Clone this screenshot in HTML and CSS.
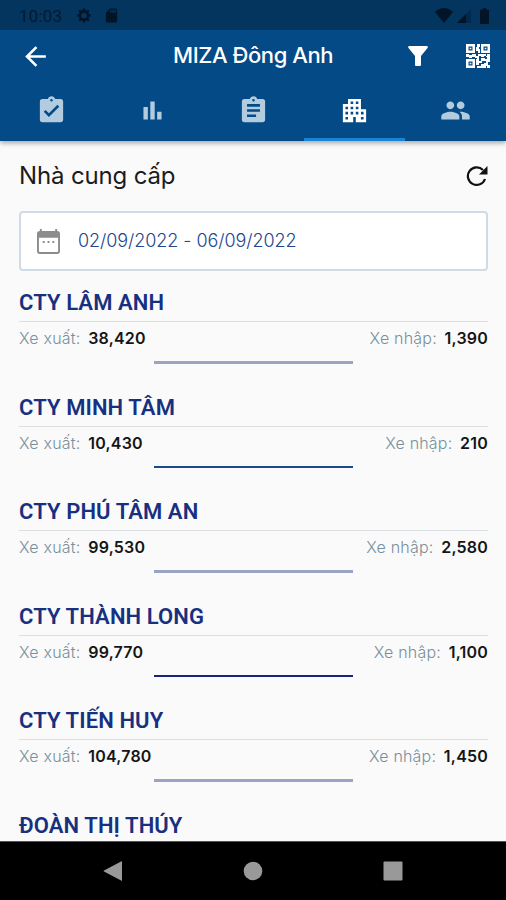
FILE: index.html
```html
<!DOCTYPE html>
<html lang="vi">
<head>
  <meta charset="utf-8">
  <title>MIZA Đông Anh</title>
  <link rel="stylesheet" href="styles.css">
</head>
<body>
  <header class="header">
    <div class="status">
      <span class="clock">10:03</span>
      <svg class="s-gear" viewBox="0 0 24 24"><path fill-rule="evenodd" d="M21 13.500v-3l-2.500-.6-.8-1.800 1.400-2.200L17 3.800l-2.200 1.400-1.300-.5L12.900 2h-3l-.6 2.700-1.500.6L5.600 3.900 3.500 6l1.400 2.200-.7 1.700-2.600.6v3l2.600.6.7 1.700L3.500 18l2.100 2.100 2.200-1.400 1.500.6.6 2.700h3l.6-2.700 1.300-.5L17 20.200l2.100-2.100-1.400-2.200.8-1.800zM11.400 8a4 4 0 1 1 0 8 4 4 0 0 1 0-8z"/></svg>
      <svg class="s-card" viewBox="0 0 24 24"><path fill-rule="evenodd" d="M18 2h-8L4 8v12a2 2 0 0 0 2 2h12a2 2 0 0 0 2-2V4a2 2 0 0 0-2-2zm-6 6h-2V4h2zm3 0h-2V4h2zm3 0h-2V4h2z"/></svg>
      <svg class="s-wifi" viewBox="0 0 18 15"><path d="M0 4Q9-4 18 4L9 15z"/></svg>
      <svg class="s-signal" viewBox="0 0 14 14"><path opacity=".35" d="M14 0v14H0z"/><path d="M9 5v9H0z"/></svg>
      <svg class="s-battery" viewBox="0 0 9 16"><path d="M3 0h3v1.500h2q1 0 1 1V15q0 1-1 1H1q-1 0-1-1V2.500q0-1 1-1h2z"/></svg>
    </div>
    <div class="appbar">
      <svg class="icon back" viewBox="0 0 24 24"><path d="M20 11H7.830l5.590-5.590L12 4l-8 8 8 8 1.410-1.410L7.830 13H20z"/></svg>
      <h1>MIZA Đông Anh</h1>
      <svg class="filter" viewBox="0 0 20 20"><path d="M1 0h18q1.500.5.500 2L13 10v9q0 1-1 1H8q-1 0-1-1v-9L.500 2Q-.5.500 1 0z"/></svg>
      <svg class="qr" viewBox="0 0 24 24">
        <path fill-rule="evenodd" d="M0 0h9v9H0zM2.500 2.500v4h4v-4zM15 0h9v9h-9zM17.500 2.500v4h4v-4zM0 15h9v9H0zM2.500 17.500v4h4v-4z"/>
        <path d="M3.700 3.700h1.600v1.600H3.700zM18.700 3.700h1.600v1.600h-1.600zM3.700 18.700h1.600v1.600H3.700zM11 0h3v3h-1v2h1v4h-2V7h-2V3h1zM0 10h3v1h3v-1h4v2h2v-2h3v2h-2v3h-2v-1H9v-1H6v1H3v-1H0zM15 10h5v2h-2v1h-3zM21 10h3v5h-3v-2h-1v-1h1zM10 15h3v2h2v-3h4v3h-3v2h-3v2h-3zM11 22h4v-2h3v2h2v2h-9zM19 15h5v3h-2v3h2v3h-3v-2h-3v-3h2v-2h-1z"/>
      </svg>
    </div>
    <nav class="tabs">
      <a class="tab"><svg class="icon" viewBox="0 0 24 24"><path fill-rule="evenodd" d="M19 3h-4.180C14.400 1.840 13.300 1 12 1s-2.400.84-2.820 2H5a2 2 0 0 0-2 2v14a2 2 0 0 0 2 2h14a2 2 0 0 0 2-2V5a2 2 0 0 0-2-2zm-7 0a1 1 0 1 1 0 2 1 1 0 0 1 0-2zm-2 14-4-4 1.410-1.410L10 14.170l6.590-6.590L18 9z"/></svg></a>
      <a class="tab"><svg class="icon" viewBox="0 0 24 24"><path d="M5 9.200h3.400V19H5zM10.300 5h3.400v14h-3.400zM15.600 13H19v6h-3.400z"/></svg></a>
      <a class="tab"><svg class="icon" viewBox="0 0 24 24"><path fill-rule="evenodd" d="M19 3h-4.180C14.400 1.840 13.300 1 12 1s-2.400.84-2.820 2H5a2 2 0 0 0-2 2v14a2 2 0 0 0 2 2h14a2 2 0 0 0 2-2V5a2 2 0 0 0-2-2zm-7 0a1 1 0 1 1 0 2 1 1 0 0 1 0-2zm2 14H7v-2h7zm3-4H7v-2h10zm0-4H7V7h10z"/></svg></a>
      <a class="tab active"><svg class="icon" viewBox="0 0 24 24"><path fill-rule="evenodd" d="M17 11V3H7v4H3v14h8v-4h2v4h8V11zM7 19H5v-2h2zm0-4H5v-2h2zm0-4H5V9h2zm4 4H9v-2h2zm0-4H9V9h2zm0-4H9V5h2zm4 8h-2v-2h2zm0-4h-2V9h2zm0-4h-2V5h2zm4 12h-2v-2h2zm0-4h-2v-2h2z"/></svg></a>
      <a class="tab"><svg class="icon" viewBox="0 0 24 24"><path d="M16 11c1.660 0 2.990-1.340 2.990-3S17.660 5 16 5s-3 1.340-3 3 1.340 3 3 3zm-8 0c1.660 0 2.990-1.340 2.990-3S9.660 5 8 5 5 6.340 5 8s1.340 3 3 3zm0 2c-2.330 0-7 1.170-7 3.500V19h14v-2.500c0-2.330-4.670-3.500-7-3.500zm8 0c-.29 0-.62.020-.97.050 1.160.84 1.970 1.970 1.970 3.450V19h6v-2.500c0-2.330-4.670-3.500-7-3.500z"/></svg></a>
    </nav>
  </header>

  <main class="content">
    <div class="heading">
      <h2>Nhà cung cấp</h2>
      <svg class="refresh" viewBox="0 0 22 22"><path class="ring" d="M19 14A8.800 8.800 0 1 1 17 5"/><path d="M21.500 1v8.500H13z"/></svg>
    </div>
    <div class="date">
      <svg class="calendar" viewBox="0 0 24 26"><path fill-rule="evenodd" d="M3 0h2v2h14V0h2v2q3 0 3 3v18q0 3-3 3H3q-3 0-3-3V5q0-3 3-3zM2 9v14q0 1 1 1h18q1 0 1-1V9z"/><path d="M6 12.500h2v2H6zM11 12.500h2v2h-2zM16 12.500h2v2h-2z"/></svg>
      <span>02/09/2022 - 06/09/2022</span>
    </div>

    <section class="supplier">
      <h3>CTY LÂM ANH</h3>
      <div class="row"><p>Xe xuất: <b>38,420</b></p><p>Xe nhập: <b>1,390</b></p></div>
      <div class="bar soft"></div>
    </section>
    <section class="supplier">
      <h3>CTY MINH TÂM</h3>
      <div class="row"><p>Xe xuất: <b>10,430</b></p><p>Xe nhập: <b>210</b></p></div>
      <div class="bar blue"></div>
    </section>
    <section class="supplier">
      <h3>CTY PHÚ TÂM AN</h3>
      <div class="row"><p>Xe xuất: <b>99,530</b></p><p>Xe nhập: <b>2,580</b></p></div>
      <div class="bar soft"></div>
    </section>
    <section class="supplier">
      <h3>CTY THÀNH LONG</h3>
      <div class="row"><p>Xe xuất: <b>99,770</b></p><p>Xe nhập: <b>1,100</b></p></div>
      <div class="bar navy"></div>
    </section>
    <section class="supplier">
      <h3>CTY TIẾN HUY</h3>
      <div class="row"><p>Xe xuất: <b>104,780</b></p><p>Xe nhập: <b>1,450</b></p></div>
      <div class="bar soft"></div>
    </section>
    <section class="supplier">
      <h3>ĐOÀN THỊ THÚY</h3>
    </section>
  </main>

  <footer class="navbar">
    <svg viewBox="0 0 20 20"><path d="M19 0v20L1 10.500q-1-.5 0-1z"/></svg>
    <svg viewBox="0 0 20 20"><circle cx="10" cy="10" r="9.300"/></svg>
    <svg viewBox="0 0 20 20"><rect x=".5" y=".5" width="19" height="19" rx="1"/></svg>
  </footer>
</body>
</html>
```
FILE: styles.css
```css
* {
  box-sizing: border-box;
}

body {
  margin: 0;
  height: 900px;
  display: flex;
  flex-direction: column;
  overflow: hidden;
  background: #fafafa;
  font-family: Inter, Roboto, sans-serif;
}

h1, h2, h3, p {
  margin: 0;
}

svg {
  display: block;
  flex: none;
}

/* header */
.header {
  height: 141px;
  flex: none;
  background: #034a86;
  box-shadow: 0 2px 5px rgba(0, 0, 0, 0.35);
  z-index: 1;
}

.status {
  height: 30px;
  display: flex;
  align-items: center;
  padding: 1px 17px 0 19px;
  background: #03355f;
  color: #021a30;
  fill: #021528;
}

.clock {
  width: 57px;
  font: 17px Roboto, sans-serif;
  letter-spacing: 0.2px;
}

.s-gear {
  width: 17px;
  height: 17px;
}

.s-card {
  width: 17px;
  height: 17px;
  margin-left: 10px;
}

.s-wifi {
  width: 18px;
  height: 15px;
  margin-left: auto;
}

.s-signal {
  width: 14px;
  height: 14px;
  margin-left: 4px;
}

.s-battery {
  width: 9px;
  height: 16px;
  margin-left: 9px;
}

.appbar {
  height: 52px;
  display: flex;
  align-items: center;
  padding: 0 16px 0 20px;
  fill: #fff;
}

.icon {
  width: 31px;
  height: 31px;
}

.appbar h1 {
  width: 168px;
  margin: -2px 0 0 122px;
  color: #fff;
  font-size: 22px;
  font-weight: 500;
  letter-spacing: -0.42px;
  white-space: nowrap;
}

.filter {
  width: 20px;
  height: 20px;
  margin-left: auto;
  margin-right: 38px;
}

.qr {
  width: 24px;
  height: 24px;
}

.tabs {
  height: 59px;
  display: grid;
  grid-template-columns: repeat(5, 1fr);
}

.tab {
  display: flex;
  justify-content: center;
  padding: 13px 0 0 1px;
  border-bottom: 3px solid transparent;
  fill: #b3cbdf;
}

.tab.active {
  fill: #fff;
  border-color: #1684d8;
}

/* content */
.content {
  flex: 1;
  min-height: 0;
  overflow: hidden;
  padding: 17px 18px 0 19px;
}

.heading {
  height: 35px;
  display: flex;
  align-items: center;
  justify-content: space-between;
}

.heading h2 {
  color: #1c1c1c;
  font-size: 24px;
  font-weight: 400;
  letter-spacing: -0.15px;
}

.refresh {
  width: 22px;
  height: 22px;
  fill: #111;
}

.ring {
  fill: none;
  stroke: #111;
  stroke-width: 2.2;
}

.date {
  height: 60px;
  display: flex;
  align-items: center;
  margin-top: 18px;
  padding-left: 16px;
  background: #fff;
  border: 2px solid #cfdbe7;
  border-radius: 4px;
  color: #21468b;
  font-size: 18px;
  font-weight: 350;
}

.date span {
  margin: -2px 0 0 18px;
  letter-spacing: -0.06px;
}

.calendar {
  width: 23px;
  height: 25px;
  fill: #8c8c8c;
}

.supplier {
  height: 104.5px;
  width: 469px;
}

.supplier:nth-of-type(1) {
  margin-top: 18px;
}

.supplier h3 {
  height: 33px;
  padding-top: 1px;
  border-bottom: 1px solid #dcdfe2;
  color: #17307f;
  font: 600 22px/25px Roboto, sans-serif;
  letter-spacing: 0.1px;
}

.row {
  height: 34px;
  display: flex;
  justify-content: space-between;
  color: #78909c;
  font-size: 16px;
  font-weight: 300;
  letter-spacing: 0.2px;
  line-height: 32px;
}

.row b {
  margin-left: 3px;
  color: #151515;
  font-weight: 600;
}

.bar {
  width: 199px;
  height: 3px;
  margin: 5px auto 0;
}

.soft {
  background: #9aa3c2;
}

.blue {
  height: 2px;
  background: #194a8a;
}

.navy {
  height: 2px;
  background: #1a237e;
}

/* android buttons */
.navbar {
  height: 59px;
  flex: none;
  display: flex;
  justify-content: center;
  align-items: center;
  gap: 120px;
  background: #000;
  border-top: 1px solid #555;
  fill: #999;
}

.navbar svg {
  width: 20px;
  height: 20px;
}
```
